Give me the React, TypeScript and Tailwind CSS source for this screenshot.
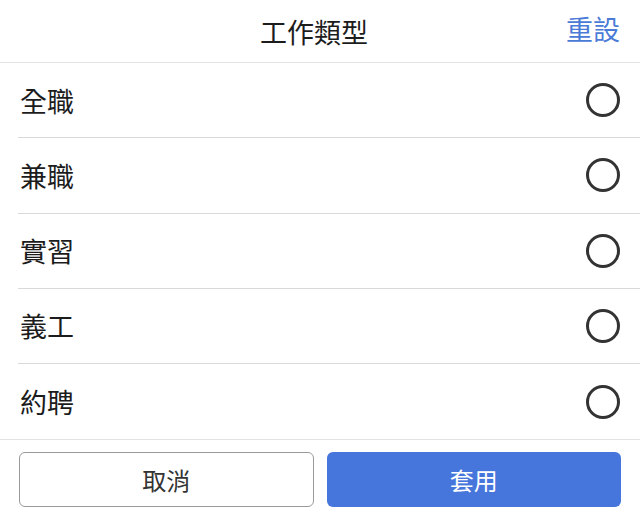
const options = ["全職", "兼職", "實習", "義工", "約聘"];

export default function App() {
  return (
    <div
      className="w-[640px] h-[522px] bg-white flex flex-col text-[#1c1c1c]"
      style={{ fontFamily: '"Noto Sans CJK TC", "Noto Sans", sans-serif' }}
    >
      <div className="relative h-[63px] pr-[12px] flex items-center justify-center border-b border-[#e3e3e3]">
        <span className="text-[27px] leading-none">工作類型</span>
        <span className="absolute right-[20px] top-[15px] text-[27px] leading-none text-[#4a7bd7]">
          重設
        </span>
      </div>
      <div className="flex flex-col">
        {options.map((label, i) => (
          <div
            key={label}
            className={
              i < options.length - 1
                ? "ml-[18px] h-[75.25px] pl-[2px] pr-[20px] flex items-center justify-between border-b border-[#d9d9d9]"
                : "ml-[18px] h-[75.25px] pl-[2px] pr-[20px] flex items-center justify-between"
            }
          >
            <span className="text-[27px] leading-none">{label}</span>
            <span className="w-[34px] h-[34px] rounded-full border-[3px] border-[#333333]" />
          </div>
        ))}
      </div>
      <div className="flex-1 border-t border-[#e3e3e3] px-[19px] pt-[12px]">
        <div className="grid grid-cols-2 gap-[13px]">
          <button className="h-[55px] rounded-[6px] border-[1.5px] border-[#9a9a9a] bg-white text-[24px] text-[#333]">
            取消
          </button>
          <button className="h-[55px] rounded-[6px] bg-[#4675db] text-[24px] text-white">
            套用
          </button>
        </div>
      </div>
    </div>
  );
}
